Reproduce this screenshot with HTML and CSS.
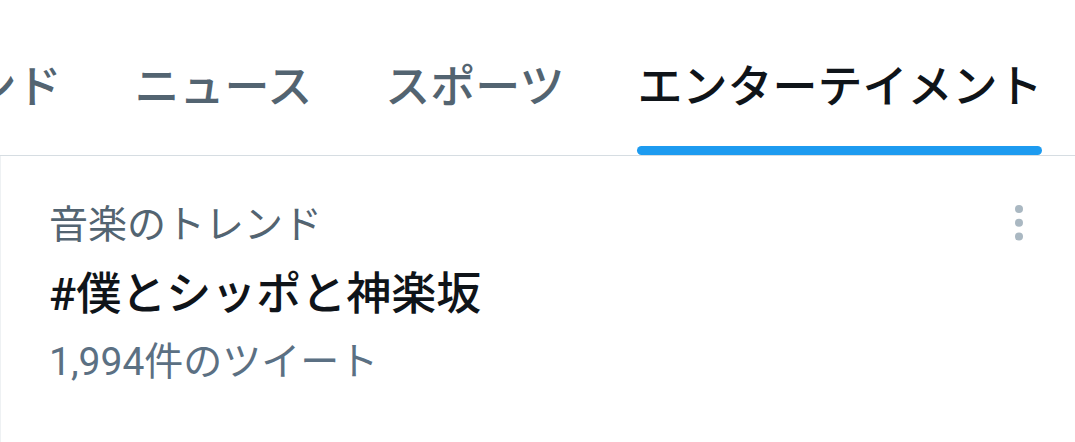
FILE: index.html
```html
<!DOCTYPE html>
<html lang="ja">
<head>
<meta charset="utf-8">
<title>トレンド</title>
<link rel="stylesheet" href="styles.css">
</head>
<body>
<nav class="tabbar">
  <div class="track">
    <a class="tab"><span class="label">トレンド</span></a>
    <a class="tab"><span class="label">ニュース</span></a>
    <a class="tab"><span class="label">スポーツ</span></a>
    <a class="tab active"><span class="label">エンターテイメント<span class="indicator"></span></span></a>
  </div>
</nav>
<section class="trend">
  <div class="trend-text">
    <div class="context">音楽のトレンド</div>
    <div class="headline">#僕とシッポと神楽坂</div>
    <div class="meta">1,994件のツイート</div>
  </div>
  <svg class="more" width="24" height="48" viewBox="0 0 24 48" aria-label="その他">
    <circle cx="12" cy="10" r="4"/>
    <circle cx="12" cy="23.7" r="4"/>
    <circle cx="12" cy="37.4" r="4"/>
  </svg>
</section>
</body>
</html>
```
FILE: styles.css
```css
html, body {
  margin: 0;
  padding: 0;
  background: #ffffff;
}

body {
  width: 1075px;
  height: 442px;
  overflow: hidden;
  font-family: "Roboto", "Noto Sans CJK JP", sans-serif;
}

.tabbar {
  height: 155px;
  border-bottom: 1px solid #d6dde2;
  overflow: hidden;
}

.track {
  display: flex;
  height: 100%;
  margin-left: -155px;
}

.tab {
  display: flex;
  flex-direction: column;
  padding: 0 36.5px;
  color: #536471;
  font-size: 45px;
  font-weight: 500;
  line-height: 45px;
  white-space: nowrap;
}

.label {
  position: relative;
  display: block;
  padding-top: 65px;
  height: 90px;
}

.tab.active {
  color: #0f1419;
}

.indicator {
  position: absolute;
  left: 0;
  right: 0;
  bottom: 0;
  height: 9px;
  border-radius: 5px;
  background: #1d9bf0;
}

.trend {
  display: flex;
  justify-content: space-between;
  align-items: flex-start;
  padding: 0 44px 0 48px;
  border-left: 1px solid #eef1f3;
  height: 286px;
}

.trend-text {
  display: flex;
  flex-direction: column;
}

.context {
  margin-top: 45px;
  font-size: 39px;
  line-height: 48px;
  color: #536471;
}

.headline {
  margin-top: 16px;
  font-size: 45px;
  line-height: 60px;
  font-weight: 500;
  color: #0f1419;
}

.meta {
  margin-top: 13px;
  font-size: 39px;
  line-height: 48px;
  color: #5b7083;
}

.more {
  margin-top: 43px;
  fill: #aab8c2;
}
```
